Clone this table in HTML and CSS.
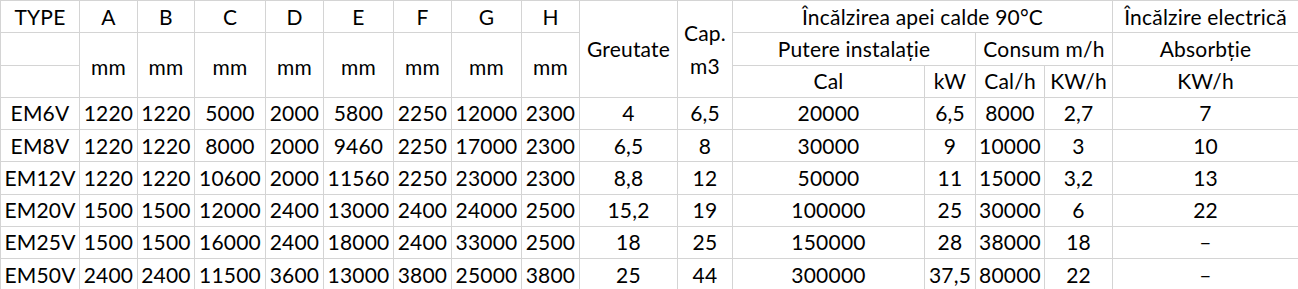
FILE: index.html
```html
<!DOCTYPE html>
<html lang="ro">
<head>
<meta charset="utf-8">
<title>EM V</title>
<link rel="stylesheet" href="styles.css">
</head>
<body>
<table class="sheet">
  <colgroup>
    <col class="w79"><col class="w58"><col class="w57"><col class="w71"><col class="w58">
    <col class="w70"><col class="w58"><col class="w70"><col class="w58"><col class="w98">
    <col class="w55"><col class="w192"><col class="w51"><col class="w69"><col class="w68"><col class="w186">
  </colgroup>
  <thead>
    <tr>
      <td>TYPE</td><td>A</td><td>B</td><td>C</td><td>D</td><td>E</td><td>F</td><td>G</td><td>H</td>
      <td rowspan="3">Greutate</td>
      <td rowspan="3" class="two">Cap.<br>m3</td>
      <td colspan="4">Încălzirea apei calde 90°C</td>
      <td>Încălzire electrică</td>
    </tr>
    <tr>
      <td></td>
      <td rowspan="2" class="mm">mm</td><td rowspan="2" class="mm">mm</td><td rowspan="2" class="mm">mm</td><td rowspan="2" class="mm">mm</td>
      <td rowspan="2" class="mm">mm</td><td rowspan="2" class="mm">mm</td><td rowspan="2" class="mm">mm</td><td rowspan="2" class="mm">mm</td>
      <td colspan="2">Putere instalație</td>
      <td colspan="2">Consum m/h</td>
      <td>Absorbție</td>
    </tr>
    <tr>
      <td></td>
      <td>Cal</td><td>kW</td><td>Cal/h</td><td>KW/h</td><td>KW/h</td>
    </tr>
  </thead>
  <tbody>
    <tr><td>EM6V</td><td>1220</td><td>1220</td><td>5000</td><td>2000</td><td>5800</td><td>2250</td><td>12000</td><td>2300</td><td>4</td><td>6,5</td><td>20000</td><td>6,5</td><td>8000</td><td>2,7</td><td>7</td></tr>
    <tr><td>EM8V</td><td>1220</td><td>1220</td><td>8000</td><td>2000</td><td>9460</td><td>2250</td><td>17000</td><td>2300</td><td>6,5</td><td>8</td><td>30000</td><td>9</td><td>10000</td><td>3</td><td>10</td></tr>
    <tr><td>EM12V</td><td>1220</td><td>1220</td><td>10600</td><td>2000</td><td>11560</td><td>2250</td><td>23000</td><td>2300</td><td>8,8</td><td>12</td><td>50000</td><td>11</td><td>15000</td><td>3,2</td><td>13</td></tr>
    <tr><td>EM20V</td><td>1500</td><td>1500</td><td>12000</td><td>2400</td><td>13000</td><td>2400</td><td>24000</td><td>2500</td><td>15,2</td><td>19</td><td>100000</td><td>25</td><td>30000</td><td>6</td><td>22</td></tr>
    <tr><td>EM25V</td><td>1500</td><td>1500</td><td>16000</td><td>2400</td><td>18000</td><td>2400</td><td>33000</td><td>2500</td><td>18</td><td>25</td><td>150000</td><td>28</td><td>38000</td><td>18</td><td>–</td></tr>
    <tr><td>EM50V</td><td>2400</td><td>2400</td><td>11500</td><td>3600</td><td>13000</td><td>3800</td><td>25000</td><td>3800</td><td>25</td><td>44</td><td>300000</td><td>37,5</td><td>80000</td><td>22</td><td>–</td></tr>
  </tbody>
</table>
</body>
</html>
```
FILE: styles.css
```css
html, body {
  margin: 0;
  padding: 0;
  background: #ffffff;
}
body {
  font-family: Lato, "Liberation Sans", sans-serif;
  font-size: 21px;
  color: #000000;
}
.sheet {
  border-collapse: collapse;
  table-layout: fixed;
  width: 1298px;
}
.sheet td {
  border: 1px solid #d4d4d4;
  height: 31.25px;
  padding: 0;
  text-align: center;
  vertical-align: middle;
  white-space: nowrap;
  line-height: 24px;
  letter-spacing: 0.2px;
}
.sheet .mm {
  padding-top: 4px;
}
.sheet .two {
  line-height: 33px;
}
.w79 { width: 79px; }
.w58 { width: 58px; }
.w57 { width: 57px; }
.w71 { width: 71px; }
.w70 { width: 70px; }
.w98 { width: 98px; }
.w55 { width: 55px; }
.w192 { width: 192px; }
.w51 { width: 51px; }
.w69 { width: 69px; }
.w68 { width: 68px; }
.w186 { width: 186px; }
```
